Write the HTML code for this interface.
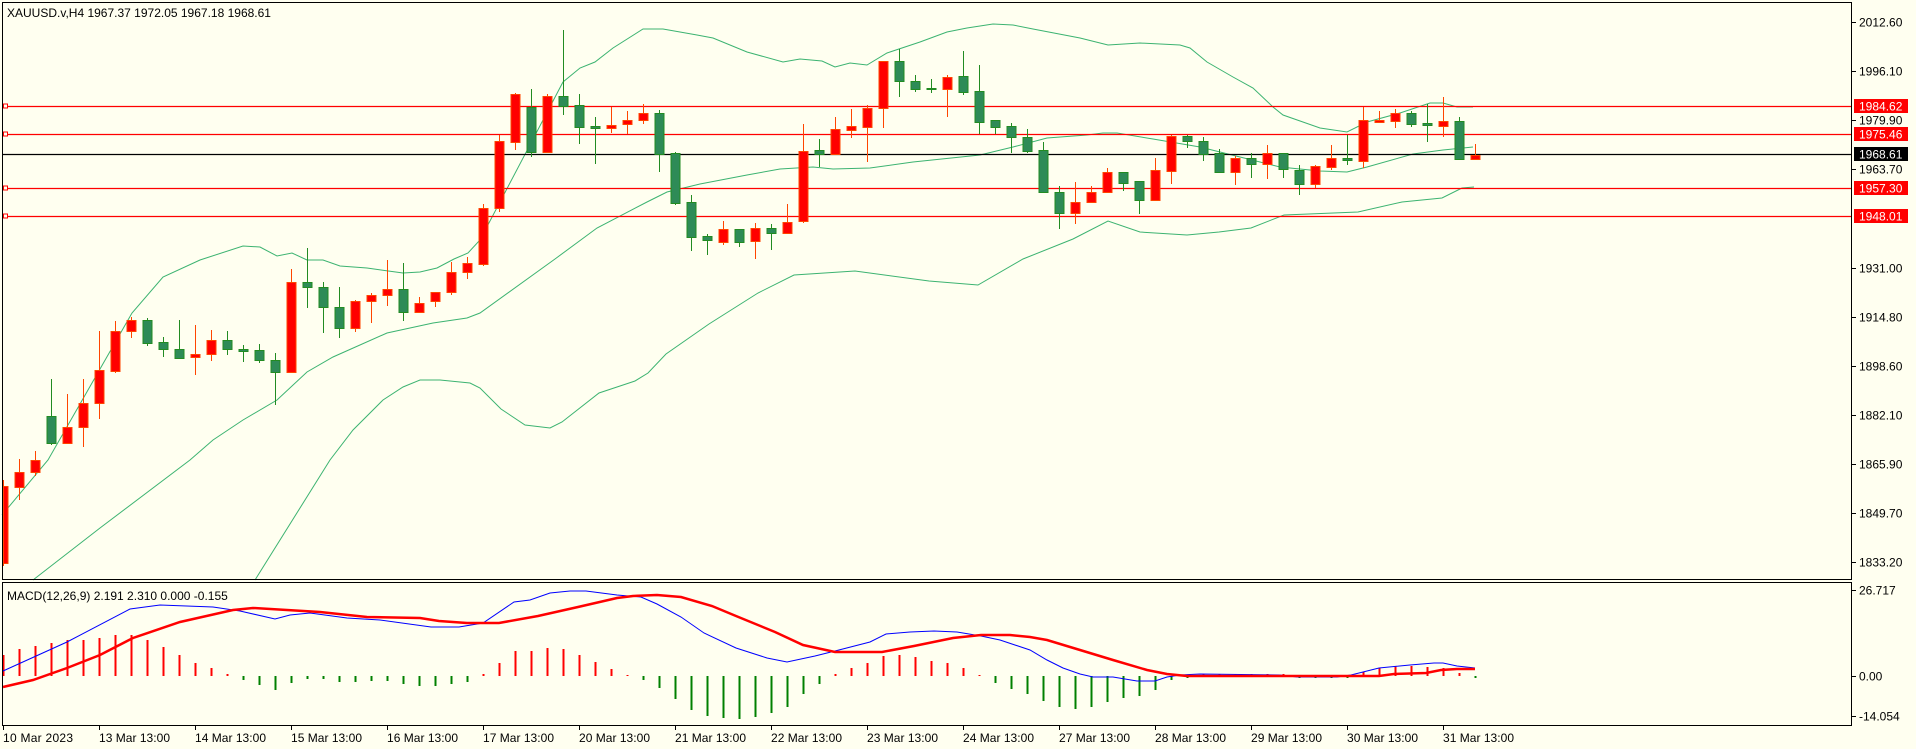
<!DOCTYPE html>
<html><head><meta charset="utf-8">
<style>
html,body{margin:0;padding:0;background:#fffff0;}
svg{display:block;}
text{font-family:"Liberation Sans","DejaVu Sans",sans-serif;font-size:12px;fill:#000;}
</style></head>
<body>
<svg id="c" width="1916" height="749" xmlns="http://www.w3.org/2000/svg">
<rect width="1916" height="749" fill="#fffff0"/>
<g id="bands" fill="none" stroke="#3cb371" stroke-width="1"></g>
<g id="levels"></g>
<g id="candles"></g>
<g id="macd"></g>
<g id="frame" fill="none" stroke="#000" stroke-width="1">
<rect x="2.5" y="2.5" width="1849" height="577"/>
<rect x="2.5" y="582.5" width="1849" height="143"/>
</g>
<g id="axis"></g>
<text x="7" y="17">XAUUSD.v,H4  1967.37 1972.05 1967.18 1968.61</text>
<text x="7" y="600">MACD(12,26,9) 2.191 2.310 0.000 -0.155</text>
</svg>
<script>
var NS="http://www.w3.org/2000/svg";
function el(p,t,a,txt){var e=document.createElementNS(NS,t);for(var k in a)e.setAttribute(k,a[k]);if(txt!==undefined)e.textContent=txt;document.getElementById(p).appendChild(e);return e;}
function pl(p,pts,st,w){el(p,'polyline',{points:pts.map(function(q){return q[0]+','+q[1]}).join(' '),fill:'none',stroke:st,'stroke-width':w||1});}
// bands
var up=[[2,515],[48,460],[132,313],[163,277],[200,260],[243,246],[260,247],[277,256],[292,253],[307,260],[323,260],[340,266],[367,268],[403,273],[420,272],[437,268],[454,259],[468,253],[480,240],[563,82],[580,68],[595,62],[613,48],[643,29],[663,29],[697,35],[713,38],[747,52],[783,62],[800,59],[822,61],[835,67],[850,63],[867,65],[887,53],[920,42],[947,32],[967,28],[993,24],[1013,25],[1033,29],[1080,38],[1108,45],[1140,43],[1180,45],[1190,48],[1207,62],[1233,77],[1253,88],[1273,107],[1283,115],[1320,128],[1347,132],[1367,122],[1400,113],[1430,103],[1443,103],[1457,107],[1473,107]];
var mid=[[33,580],[100,528],[190,460],[213,440],[243,420],[277,400],[307,372],[333,357],[387,333],[433,323],[467,318],[480,313],[555,259],[597,228],[647,202],[667,192],[700,184],[747,175],[780,169],[813,167],[833,169],[870,168],[913,162],[980,155],[1013,147],[1047,138],[1087,135],[1103,133],[1117,133],[1153,139],[1200,147],[1240,157],[1280,167],[1320,171],[1347,172],[1367,167],[1413,154],[1443,150],[1473,147]];
var lo=[[255,580],[330,460],[353,430],[383,400],[403,387],[420,380],[440,380],[470,383],[480,388],[501,409],[525,425],[550,428],[562,422],[599,393],[635,381],[648,373],[666,354],[709,324],[758,293],[794,275],[855,271],[929,281],[978,285],[1023,259],[1073,239],[1108,221],[1140,232],[1187,235],[1219,232],[1251,228],[1284,215],[1358,212],[1402,202],[1442,198],[1462,188],[1474,187]];
pl('bands',up,'#3cb371');pl('bands',mid,'#3cb371');pl('bands',lo,'#3cb371');
// levels
[106.5,134.5,188.5,216.5].forEach(function(y){el('levels','line',{x1:3,y1:y,x2:1852,y2:y,stroke:'#ff0000','stroke-width':1.3});el('levels','rect',{x:3.5,y:y-2.5,width:4,height:4,fill:'#fffff0',stroke:'#ff0000','stroke-width':1});});
el('levels','line',{x1:3,y1:154.5,x2:1852,y2:154.5,stroke:'#000','stroke-width':1.2});
// candles [k,wt,wb,bt,bb,red]
var C=[[0,480,566,486,563,1],[1,459,500,472,487,1],[2,451,476,460,472,1],[3,379,445,416,443,0],[4,394,443,427,443,1],[5,379,447,403,427,1],[6,331,419,370,403,1],[7,321,373,331,371,1],[8,317,338,320,331,1],[9,318,346,320,343,0],[10,337,357,342,349,0],[11,320,358,349,358,0],[12,325,375,354,357,1],[13,330,361,340,354,1],[14,331,355,340,349,0],[15,345,362,349,351,0],[16,344,363,350,360,0],[17,353,405,360,372,0],[18,269,372,282,372,1],[19,248,308,282,287,0],[20,282,333,287,307,0],[21,287,338,307,328,0],[22,300,332,301,328,1],[23,293,323,295,301,1],[24,260,306,289,295,1],[25,263,321,289,312,0],[26,297,312,303,312,1],[27,292,307,292,301,1],[28,262,295,272,292,1],[29,257,279,263,272,1],[30,204,266,208,264,1],[31,135,212,141,208,1],[32,93,150,94,142,1],[33,89,157,107,152,0],[34,94,153,96,152,1],[35,30,115,96,106,0],[36,94,144,105,127,0],[37,117,164,126,128,0],[38,107,133,125,128,1],[39,111,134,120,124,1],[40,104,124,113,120,1],[41,110,172,113,154,0],[42,152,205,153,203,0],[43,195,251,202,237,0],[44,234,255,236,240,0],[45,221,245,229,242,1],[46,229,247,229,242,0],[47,223,259,228,241,1],[48,224,250,228,233,0],[49,204,233,222,233,1],[50,124,223,151,221,1],[51,139,167,150,154,0],[52,117,155,129,154,1],[53,109,138,126,130,1],[54,105,162,108,127,1],[55,61,128,61,108,1],[56,49,97,61,81,0],[57,75,92,81,89,0],[58,79,93,88,89,0],[59,75,117,77,89,1],[60,51,95,76,92,0],[61,65,134,91,122,0],[62,120,134,120,127,0],[63,123,153,126,137,0],[64,129,153,137,151,0],[65,142,192,150,192,0],[66,186,229,192,213,0],[67,182,224,202,213,1],[68,186,202,192,202,1],[69,168,192,172,192,1],[70,172,191,172,183,0],[71,181,214,181,200,0],[72,158,201,170,200,1],[73,135,184,136,171,1],[74,135,148,136,141,0],[75,137,161,141,154,0],[76,149,172,153,172,0],[77,156,185,158,172,1],[78,153,178,158,164,0],[79,145,179,153,164,1],[80,153,178,153,169,0],[81,165,195,170,184,0],[82,165,188,166,184,1],[83,145,170,158,167,1],[84,135,165,158,160,0],[85,107,168,120,161,1],[86,111,122,120,122,1],[87,109,128,113,121,1],[88,111,127,113,124,0],[89,104,142,123,125,0],[90,97,137,121,126,1],[91,117,160,121,159,0],[92,144,160,155,159,1]];
C.forEach(function(c){var x=3.5+16*c[0];var r=c[5];
 el('candles','line',{x1:x,y1:c[1],x2:x,y2:c[2],stroke:r?'#ff4500':'#228b22','stroke-width':1});
 var h=Math.max(c[4]-c[3],1);
 var bx=Math.max(x-5,3);
 el('candles','rect',{x:bx+0.5,y:c[3]+0.5,width:x+5-bx-1+0.0,height:h-0.0,fill:r?'#ff0000':'#2e8b57',stroke:r?'#ff4500':'#228b22','stroke-width':1});
});
// macd histogram: [k,y]
var H=[[0,655],[1,649],[2,646],[3,643],[4,640],[5,640],[6,638],[7,635],[8,635],[9,640],[10,647],[11,655],[12,663],[13,668],[14,674],[15,680],[16,685],[17,690],[18,683],[19,679],[20,679],[21,682],[22,682],[23,681],[24,681],[25,684],[26,686],[27,686],[28,684],[29,682],[30,674],[31,663],[32,651],[33,651],[34,648],[35,649],[36,655],[37,662],[38,669],[39,675],[40,680],[41,688],[42,699],[43,710],[44,716],[45,718],[46,719],[47,717],[48,713],[49,707],[50,694],[51,684],[52,674],[53,668],[54,663],[55,656],[56,655],[57,657],[58,661],[59,663],[60,668],[61,675],[62,683],[63,689],[64,694],[65,701],[66,707],[67,709],[68,707],[69,702],[70,698],[71,696],[72,690],[73,680],[74,678],[75,674],[76,674],[77,674],[78,674],[79,674],[80,674],[81,678],[82,678],[83,678],[84,678],[85,672],[86,668],[87,666],[88,666],[89,667],[90,668],[91,673],[92,678]];
H.forEach(function(h){var x=3.5+16*h[0];var y=h[1];var pos=y<676;
 el('macd','rect',{x:x-1,y:pos?y:676,width:2,height:Math.max(Math.abs(676-y),1),fill:pos?'#ff0000':'#008000'});});
var bl=[[3,671],[67,642],[130,609],[160,605],[213,607],[240,611],[275,619],[290,615],[310,613],[347,618],[380,620],[431,627],[459,627],[483,623],[514,602],[530,600],[550,593],[570,591],[586,591],[617,595],[641,597],[657,604],[681,617],[704,633],[736,648],[767,658],[787,662],[815,656],[835,651],[870,642],[886,634],[910,632],[934,631],[957,632],[981,636],[1000,640],[1030,650],[1047,660],[1063,668],[1080,674],[1093,677],[1113,677],[1137,681],[1155,681],[1167,677],[1180,675],[1200,674],[1280,675],[1297,677],[1337,677],[1351,675],[1379,668],[1410,665],[1434,663],[1443,663],[1457,666],[1475,668]];
var rd=[[3,687],[33,680],[67,668],[100,655],[133,638],[180,622],[233,610],[253,608],[320,612],[367,617],[420,618],[439,621],[467,623],[499,623],[538,616],[578,607],[617,598],[633,596],[657,595],[681,597],[712,606],[736,616],[775,632],[803,645],[835,652],[882,652],[914,646],[953,638],[981,635],[1010,635],[1030,637],[1047,640],[1080,650],[1113,660],[1147,670],[1167,674],[1187,676],[1379,676],[1394,674],[1426,673],[1441,670],[1457,669],[1475,669]];
pl('macd',bl,'#0000ff',1);pl('macd',rd,'#ff0000',2.5);
// axis
var A=[['2012.60',22],['1996.10',71],['1979.90',120],['1963.70',169],['1931.00',268],['1914.80',317],['1898.60',366],['1882.10',415],['1865.90',464],['1849.70',513],['1833.20',562],['26.717',590],['0.00',676],['-14.054',716]];
A.forEach(function(a){el('axis','line',{x1:1852,y1:a[1]+0.5,x2:1856,y2:a[1]+0.5,stroke:'#000'});el('axis','text',{x:1859,y:a[1]+4.5},a[0]);});
[['1984.62',106],['1975.46',134],['1957.30',188],['1948.01',216]].forEach(function(a){el('axis','rect',{x:1854,y:a[1]-7,width:54,height:14,fill:'#ff0000'});el('axis','text',{x:1859,y:a[1]+4.5,style:'fill:#fff'},a[0]);});
el('axis','rect',{x:1854,y:147,width:54,height:14,fill:'#000'});el('axis','text',{x:1859,y:158.5,style:'fill:#fff'},'1968.61');
var T=['10 Mar 2023','13 Mar 13:00','14 Mar 13:00','15 Mar 13:00','16 Mar 13:00','17 Mar 13:00','20 Mar 13:00','21 Mar 13:00','22 Mar 13:00','23 Mar 13:00','24 Mar 13:00','27 Mar 13:00','28 Mar 13:00','29 Mar 13:00','30 Mar 13:00','31 Mar 13:00'];
T.forEach(function(t,i){var x=3+96*i;el('axis','line',{x1:x+0.5,y1:726,x2:x+0.5,y2:730,stroke:'#000'});el('axis','text',{x:x+(i==0?0:0),y:742,textLength:t.length>11?71:70},t);});
</script>
</body></html>
